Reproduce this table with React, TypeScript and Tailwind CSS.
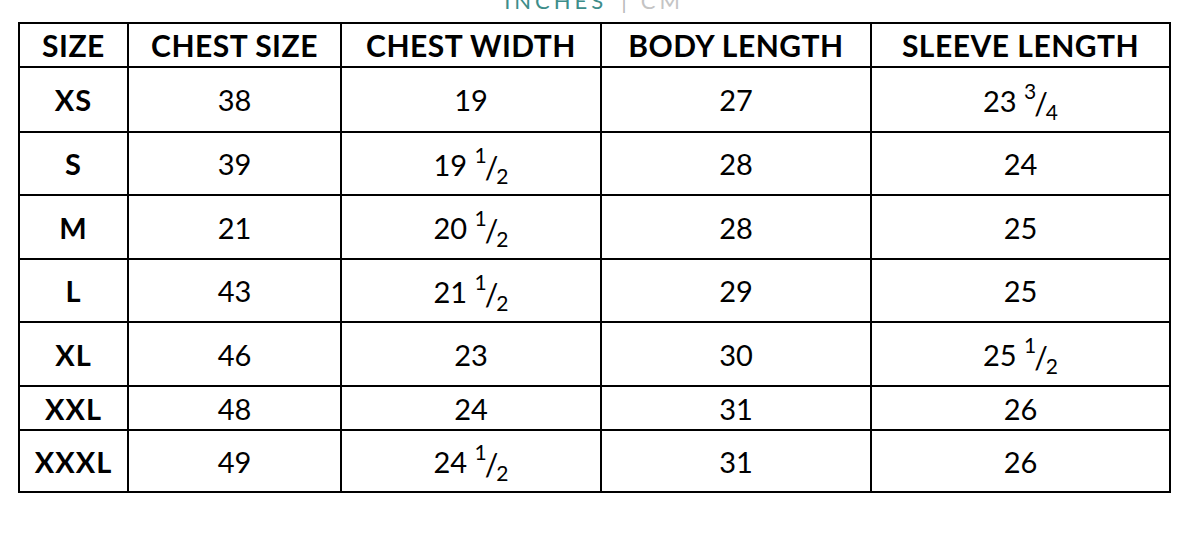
const rows: { size: string; cells: [string, string | null][]; h: string }[] = [
  { size: "XS", h: "h-[65px]", cells: [["38", null], ["19", null], ["27", null], ["23", "3/4"]] },
  { size: "S", h: "h-[63px]", cells: [["39", null], ["19", "1/2"], ["28", null], ["24", null]] },
  { size: "M", h: "h-[64px]", cells: [["21", null], ["20", "1/2"], ["28", null], ["25", null]] },
  { size: "L", h: "h-[63px]", cells: [["43", null], ["21", "1/2"], ["29", null], ["25", null]] },
  { size: "XL", h: "h-[64px]", cells: [["46", null], ["23", null], ["30", null], ["25", "1/2"]] },
  { size: "XXL", h: "h-[44px]", cells: [["48", null], ["24", null], ["31", null], ["26", null]] },
  { size: "XXXL", h: "h-[62px]", cells: [["49", null], ["24", "1/2"], ["31", null], ["26", null]] },
];

const headers = ["SIZE", "CHEST SIZE", "CHEST WIDTH", "BODY LENGTH", "SLEEVE LENGTH"];

function Value({ whole, frac }: { whole: string; frac: string | null }) {
  if (!frac) return <>{whole}</>;
  const [top, bottom] = frac.split("/");
  return (
    <>
      {whole} <sup className="text-[21px] -top-[0.6em]">{top}</sup>
      <span className="text-[30px] relative top-[3px] -mx-[2px]">/</span>
      <sub className="text-[21px] -bottom-[0.4em]">{bottom}</sub>
    </>
  );
}

export default function App() {
  return (
    <div className="w-[1188px] h-[536px] bg-white text-black font-['Lato',sans-serif]">
      <div className="h-[22px] overflow-hidden">
        <div className="-mt-[11px] leading-[24px] text-[22px] flex justify-center items-baseline">
          <span className="text-[#3d8d8a] tracking-[4px]">INCHES</span>
          <span className="text-[#b9b9b9] mx-[14px]">|</span>
          <span className="text-[#c4c4c4] tracking-[4px]">CM</span>
        </div>
      </div>
      <table className="ml-[18px] w-[1151px] border-collapse border-2 border-black table-fixed">
        <colgroup>
          <col className="w-[109px]" />
          <col className="w-[213px]" />
          <col className="w-[260px]" />
          <col className="w-[270px]" />
          <col className="w-[299px]" />
        </colgroup>
        <thead>
          <tr className="h-[44px]">
            {headers.map((h) => (
              <th key={h} className="border-2 border-black text-[30px] font-bold leading-none text-center p-0 tracking-[0.5px]">
                {h}
              </th>
            ))}
          </tr>
        </thead>
        <tbody>
          {rows.map((r) => (
            <tr key={r.size} className={r.h}>
              <td className="border-2 border-black text-[29px] font-bold text-center leading-none p-0 tracking-[1px]">
                {r.size}
              </td>
              {r.cells.map(([w, f], i) => (
                <td key={i} className="border-2 border-black text-[29px] text-center leading-none p-0">
                  <Value whole={w} frac={f} />
                </td>
              ))}
            </tr>
          ))}
        </tbody>
      </table>
    </div>
  );
}
